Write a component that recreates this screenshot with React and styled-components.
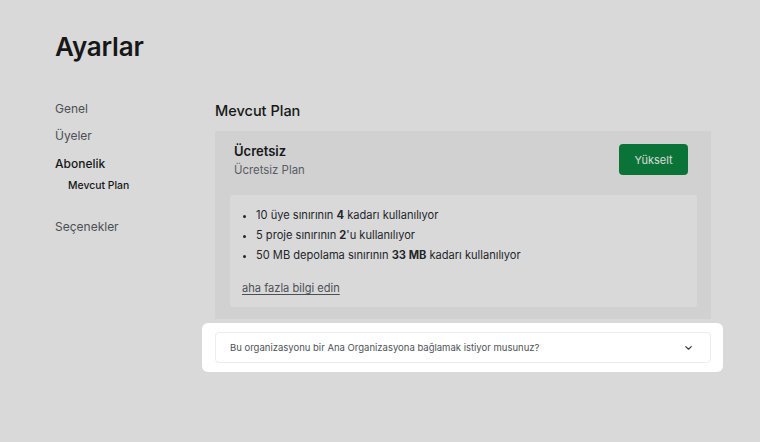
import React from "react";
import styled, { createGlobalStyle } from "styled-components";

const Global = createGlobalStyle`
  html, body { margin: 0; padding: 0; background: #ffffff; }
  body { font-family: Inter, "Noto Sans", sans-serif; color: #1f2328; overflow: hidden; }
  * { box-sizing: border-box; }
`;

const Page = styled.div`
  width: 760px;
  height: 442px;
  padding: 30px 49px 0 55px;
  background: #ffffff;
`;

const Title = styled.h1`
  margin: 0;
  font-size: 26px;
  line-height: 34px;
  font-weight: 600;
  color: #1a1c20;
  letter-spacing: -0.2px;
`;

const Body = styled.div`
  display: grid;
  grid-template-columns: 160px 1fr;
  margin-top: 37px;
`;

const Side = styled.nav`
  display: flex;
  flex-direction: column;
  margin-top: -1px;
`;

const SideItem = styled.div`
  line-height: 18px;
  height: ${(p) => p.$h}px;
  padding-left: ${(p) => (p.$sub ? "13px" : "0")};
  font-size: ${(p) => (p.$sub ? "10.4px" : "12px")};
  font-weight: ${(p) => (p.$active || p.$sub ? 500 : 400)};
  color: ${(p) => (p.$active || p.$sub ? "#1a1c20" : "#5a5e66")};
`;

const Main = styled.section`
  display: flex;
  flex-direction: column;
`;

const Heading = styled.h2`
  margin: 0;
  font-size: 14.5px;
  line-height: 20px;
  font-weight: 500;
  color: #1a1c20;
`;

const Card = styled.div`
  margin-top: 10px;
  background: #f6f6f6;
  padding: 0 14px 12px 15px;
`;

const CardHead = styled.div`
  display: flex;
  justify-content: space-between;
  align-items: flex-start;
  padding: 11px 9px 16px 4px;
`;

const PlanName = styled.div`
  font-size: 13px;
  line-height: 18px;
  font-weight: 600;
  color: #1a1c20;
`;

const PlanSub = styled.div`
  font-size: 11.4px;
  line-height: 18px;
  color: #6a6e76;
  margin-top: 1px;
`;

const UpgradeButton = styled.button`
  margin-top: 2px;
  width: 69px;
  height: 31px;
  border: none;
  border-radius: 4px;
  background: #0c8841;
  color: #ffffff;
  font-family: inherit;
  font-size: 11px;
  cursor: pointer;
`;

const Usage = styled.div`
  background: #ffffff;
  border-radius: 3px;
  padding: 10px 12px 9px 12px;
`;

const List = styled.ul`
  margin: 0;
  padding: 0 0 0 14px;
  list-style: disc;
  font-size: 11.1px;
  line-height: 20px;
  color: #2a2d33;
  li::marker { font-size: 10px; }
`;

const More = styled.a`
  display: block;
  margin-top: 13px;
  font-size: 11.1px;
  line-height: 20px;
  color: #5a5e66;
  text-decoration: underline;
  text-underline-offset: 2px;
`;

const Spot = styled.div`
  position: relative;
  margin-top: 13px;
`;

const Highlight = styled.div`
  position: absolute;
  inset: -9px -12px -9px -13px;
  border-radius: 6px;
  box-shadow: 0 0 0 3000px rgba(0, 0, 0, 0.15);
  pointer-events: none;
`;

const Accordion = styled.div`
  height: 31px;
  border: 1px solid #ececec;
  border-radius: 4px;
  display: flex;
  align-items: center;
  justify-content: space-between;
  padding: 0 18px 0 14px;
  font-size: 9.5px;
  color: #4f535a;
`;

export default function App() {
  return (
    <>
      <Global />
      <Page>
        <Title>Ayarlar</Title>
        <Body>
          <Side>
            <SideItem $h={27}>Genel</SideItem>
            <SideItem $h={28}>Üyeler</SideItem>
            <SideItem $h={22} $active>Abonelik</SideItem>
            <SideItem $h={41} $sub>Mevcut Plan</SideItem>
            <SideItem $h={18}>Seçenekler</SideItem>
          </Side>
          <Main>
            <Heading>Mevcut Plan</Heading>
            <Card>
              <CardHead>
                <div>
                  <PlanName>Ücretsiz</PlanName>
                  <PlanSub>Ücretsiz Plan</PlanSub>
                </div>
                <UpgradeButton>Yükselt</UpgradeButton>
              </CardHead>
              <Usage>
                <List>
                  <li>10 üye sınırının <b>4</b> kadarı kullanılıyor</li>
                  <li>5 proje sınırının <b>2</b>'u kullanılıyor</li>
                  <li>50 MB depolama sınırının <b>33 MB</b> kadarı kullanılıyor</li>
                </List>
                <More>aha fazla bilgi edin</More>
              </Usage>
            </Card>
            <Spot>
              <Accordion>
                <span>Bu organizasyonu bir Ana Organizasyona bağlamak istiyor musunuz?</span>
                <svg width="7" height="4" viewBox="0 0 7 4" fill="none">
                  <path d="M0.8 0.6l2.7 2.6 2.7-2.6" stroke="#3a3d44" strokeWidth="1.2" strokeLinecap="round" strokeLinejoin="round" />
                </svg>
              </Accordion>
              <Highlight />
            </Spot>
          </Main>
        </Body>
      </Page>
    </>
  );
}
